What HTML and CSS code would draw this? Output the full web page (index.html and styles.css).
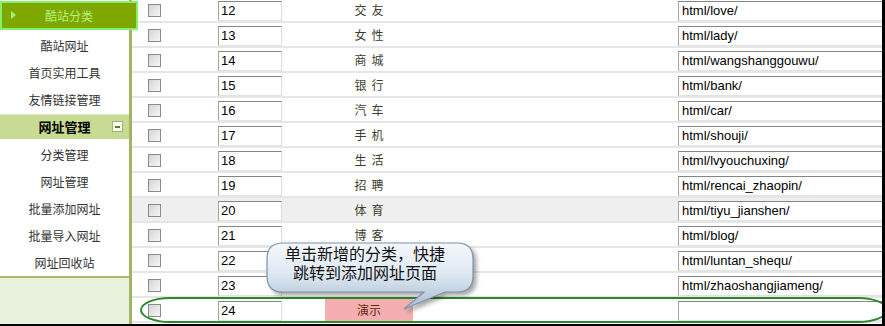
FILE: index.html
```html
<!DOCTYPE html>
<html lang="zh-CN">
<head>
    <meta charset="UTF-8">
    <title>酷站分类</title>
    <link rel="stylesheet" href="styles.css">
</head>
<body>
    <div class="frame">
        <aside class="side">
            <a class="side-item active"><span class="arrow"></span>酷站分类</a>
            <a class="side-item">酷站网址</a>
            <a class="side-item">首页实用工具</a>
            <a class="side-item">友情链接管理</a>
            <div class="side-head">网址管理<span class="toggle"></span></div>
            <a class="side-item">分类管理</a>
            <a class="side-item">网址管理</a>
            <a class="side-item">批量添加网址</a>
            <a class="side-item">批量导入网址</a>
            <a class="side-item">网址回收站</a>
            <div class="side-foot"></div>
        </aside>

        <main class="main">
            <div class="rows">
                <div class="row"><div class="c-check"><span class="box"></span></div><div class="c-num"><span class="field num">12</span></div><div class="c-name">交友</div><div class="c-gap"></div><div class="c-url"><span class="field url">html/love/</span></div></div>
                <div class="row"><div class="c-check"><span class="box"></span></div><div class="c-num"><span class="field num">13</span></div><div class="c-name">女性</div><div class="c-gap"></div><div class="c-url"><span class="field url">html/lady/</span></div></div>
                <div class="row"><div class="c-check"><span class="box"></span></div><div class="c-num"><span class="field num">14</span></div><div class="c-name">商城</div><div class="c-gap"></div><div class="c-url"><span class="field url">html/wangshanggouwu/</span></div></div>
                <div class="row"><div class="c-check"><span class="box"></span></div><div class="c-num"><span class="field num">15</span></div><div class="c-name">银行</div><div class="c-gap"></div><div class="c-url"><span class="field url">html/bank/</span></div></div>
                <div class="row"><div class="c-check"><span class="box"></span></div><div class="c-num"><span class="field num">16</span></div><div class="c-name">汽车</div><div class="c-gap"></div><div class="c-url"><span class="field url">html/car/</span></div></div>
                <div class="row"><div class="c-check"><span class="box"></span></div><div class="c-num"><span class="field num">17</span></div><div class="c-name">手机</div><div class="c-gap"></div><div class="c-url"><span class="field url">html/shouji/</span></div></div>
                <div class="row"><div class="c-check"><span class="box"></span></div><div class="c-num"><span class="field num">18</span></div><div class="c-name">生活</div><div class="c-gap"></div><div class="c-url"><span class="field url">html/lvyouchuxing/</span></div></div>
                <div class="row"><div class="c-check"><span class="box"></span></div><div class="c-num"><span class="field num">19</span></div><div class="c-name">招聘</div><div class="c-gap"></div><div class="c-url"><span class="field url">html/rencai_zhaopin/</span></div></div>
                <div class="row hover"><div class="c-check"><span class="box"></span></div><div class="c-num"><span class="field num">20</span></div><div class="c-name">体育</div><div class="c-gap"></div><div class="c-url"><span class="field url">html/tiyu_jianshen/</span></div></div>
                <div class="row"><div class="c-check"><span class="box"></span></div><div class="c-num"><span class="field num">21</span></div><div class="c-name">博客</div><div class="c-gap"></div><div class="c-url"><span class="field url">html/blog/</span></div></div>
                <div class="row"><div class="c-check"><span class="box"></span></div><div class="c-num"><span class="field num">22</span></div><div class="c-name">论坛</div><div class="c-gap"></div><div class="c-url"><span class="field url">html/luntan_shequ/</span></div></div>
                <div class="row"><div class="c-check"><span class="box"></span></div><div class="c-num"><span class="field num">23</span></div><div class="c-name">招商</div><div class="c-gap"></div><div class="c-url"><span class="field url">html/zhaoshangjiameng/</span></div></div>
                <div class="row"><div class="c-check"><span class="box"></span></div><div class="c-num"><span class="field num">24</span></div><div class="c-name new">演示</div><div class="c-gap"></div><div class="c-url"><span class="field url"></span></div></div>
            </div>

            <!-- callout over the new row -->
            <div class="ring"></div>
            <div class="tip">
                <svg width="220" height="80" viewBox="0 0 220 80">
                    <defs>
                        <linearGradient id="tipFill" x1="0" y1="0" x2="0" y2="1">
                            <stop offset="0" stop-color="#f4f8fc"/>
                            <stop offset="0.45" stop-color="#dfe9f3"/>
                            <stop offset="1" stop-color="#a9bdd2"/>
                        </linearGradient>
                    </defs>
                    <path d="M21 5 H195 Q211 5 211 21 V38 Q211 54 195 54 H183 L142 71 L162 54 H21 Q5 54 5 38 V21 Q5 5 21 5 Z" fill="url(#tipFill)" stroke="#7f93aa" stroke-width="1.2"/>
                </svg>
                <div class="tip-text">单击新增的分类，快捷<br>跳转到添加网址页面</div>
            </div>
        </main>
    </div>
</body>
</html>
```

FILE: styles.css
```css
body {
    margin: 0;
    font-family: "Noto Sans CJK SC", "Liberation Sans", sans-serif;
    font-size: 12px;
    background: #fff;
}
.frame {
    display: flex;
    width: 885px;
    height: 326px;
    box-sizing: border-box;
    border-right: 3px solid #000;
    border-bottom: 2px solid #000;
    overflow: hidden;
}

/* sidebar */
.side {
    width: 129px;
    flex-shrink: 0;
    display: flex;
    flex-direction: column;
    border-right: 3px solid #a2b462;
    background: #fff;
}
.side-item {
    display: block;
    height: 27px;
    line-height: 27px;
    text-align: center;
    color: #333;
    text-decoration: none;
}
.side-item.active {
    position: relative;
    z-index: 2;
    height: 25px;
    line-height: 25px;
    margin: 1px -9px 2px 0;
    border: 2px solid #84f06c;
    background: #7ea700;
    color: #b6f27e;
}
.arrow {
    position: absolute;
    left: 9px;
    top: 8px;
    width: 0;
    height: 0;
    border-top: 4px solid transparent;
    border-bottom: 4px solid transparent;
    border-left: 5px solid #a8f070;
}
.side-head {
    position: relative;
    height: 24px;
    line-height: 24px;
    margin: 1px 0 2px;
    border-top: 1px solid #dfe8c6;
    background: #c8db92;
    text-align: center;
    font-size: 13px;
    font-weight: bold;
    color: #000;
}
.toggle {
    position: absolute;
    right: 6px;
    top: 6px;
    width: 9px;
    height: 9px;
    border: 1px solid #a0b468;
    background: #fff;
}
.toggle::after {
    content: "";
    position: absolute;
    left: 2px;
    top: 4px;
    width: 5px;
    height: 2px;
    background: #5d7d1a;
}
.side-foot {
    flex: 1;
    border-top: 2px solid #a8b870;
    background: #e9f2dc;
}

/* table */
.main {
    flex: 1;
    position: relative;
    overflow: hidden;
}
.rows {
    margin-top: -2px;
}
.row {
    display: flex;
    align-items: flex-start;
    height: 23px;
    border-bottom: 2px solid #e6e6e6;
    white-space: nowrap;
}
.row.hover {
    background: #efefef;
}
.c-check {
    width: 86px;
    flex-shrink: 0;
}
.box {
    display: block;
    width: 11px;
    height: 11px;
    margin: 6px 0 0 16px;
    border: 1px solid #8a8a8a;
    background: linear-gradient(135deg, #d4d4d4, #f6f6f6);
}
.c-num {
    width: 107px;
    flex-shrink: 0;
}
.field {
    display: block;
    box-sizing: border-box;
    height: 20px;
    margin-top: 3px;
    padding-left: 2px;
    border: 1px solid;
    border-color: #858585 #dedede #e2e2e2 #a4a4a4;
    background: #fff;
    font-family: "Liberation Sans", Arial, sans-serif;
    font-size: 13px;
    line-height: 18px;
    color: #000;
}
.num {
    width: 64px;
}
.c-name {
    width: 88px;
    flex-shrink: 0;
    height: 23px;
    line-height: 23px;
    text-align: center;
    letter-spacing: 5px;
    padding-left: 5px;
    box-sizing: border-box;
    color: #3d3d2e;
}
.c-name.new {
    height: 25px;
    padding-left: 0;
    letter-spacing: 0;
    background: #f4b0b0;
    color: #6a2a10;
}
.c-gap {
    width: 265px;
    flex-shrink: 0;
}
.c-url {
    flex-shrink: 0;
}
.url {
    width: 220px;
    padding-left: 3px;
}

/* callout */
.ring {
    position: absolute;
    left: 8px;
    top: 297px;
    width: 744px;
    height: 22px;
    border: 2px solid #2a8a2a;
    border-radius: 30px / 13px;
}
.tip {
    position: absolute;
    left: 130px;
    top: 238px;
    width: 220px;
    height: 80px;
}
.tip svg {
    display: block;
    filter: drop-shadow(3px 3px 2px rgba(0, 0, 0, 0.35));
}
.tip-text {
    position: absolute;
    left: 5px;
    top: 6px;
    width: 196px;
    text-align: center;
    font-size: 16px;
    line-height: 19px;
    color: #111;
}
```
